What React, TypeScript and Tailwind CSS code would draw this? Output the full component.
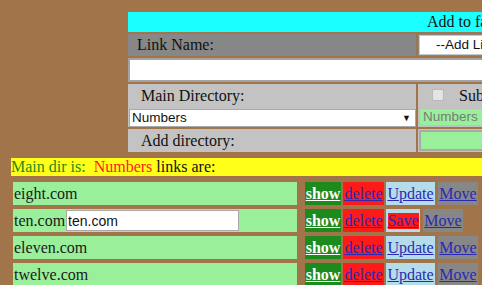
import React from 'react';

const links = ['eight.com', 'ten.com', 'eleven.com', 'twelve.com'];

const serif = "font-['Liberation_Serif','Times_New_Roman',serif]";
const sans = "font-['Liberation_Sans',Arial,sans-serif]";

const LinkRow: React.FC<{ name: string; editing?: boolean }> = ({ name, editing }) => {
  return (
    <div className="flex h-[23px] items-stretch">
      <div className="ml-[13px] flex w-[284px] items-center bg-[#9aef9a] pl-[1px] text-[16px] text-[#1a1a1a]">
        {name}
        {editing && (
          <input
            defaultValue={name}
            className={`${sans} ml-[1px] h-[21px] w-[173px] border border-[#a9a9a9] bg-white px-[1px] text-[14px] text-[#111] outline-none`}
          />
        )}
      </div>
      <div className="ml-[8px] flex items-stretch gap-[2px]">
        <a className="flex w-[36px] items-center justify-center bg-[#1d8a1d] font-bold text-white underline">show</a>
        <a className="flex w-[41px] items-center justify-center bg-[#ff1a1a] text-[#2a2ab0] underline">delete</a>
        {editing ? (
          <div className="flex w-[34px] items-center justify-center bg-[#b4dcea] p-[1px]">
            <a className="flex h-[16px] w-[31px] items-center justify-center bg-[#ff1a1a] text-[#2a2ab0] underline">Save</a>
          </div>
        ) : (
          <a className="flex w-[49px] items-center justify-center bg-[#b4dcea] text-[#2a2ab0] underline">Update</a>
        )}
        <a className="ml-[1px] flex w-[40px] items-center justify-center bg-[#878787] text-[#2a2ab0] underline">Move</a>
      </div>
    </div>
  );
};

const App: React.FC = () => {
  return (
    <div className={`${serif} h-[285px] w-[482px] overflow-hidden bg-[#a27449] text-[16px] leading-none text-[#111]`}>
      <div className="ml-[128px] flex w-[700px] flex-col gap-[2px] pt-[12px]">
        <div className="flex h-[20px] items-center bg-[#1affff] pl-[299px]">Add to favorites</div>
        <div className="flex h-[22px] gap-[2px]">
          <div className="flex w-[288px] items-center bg-[#878787] pl-[9px]">Link Name:</div>
          <div className="flex flex-1 items-center bg-[#878787] pl-[1px]">
            <div className={`${sans} flex h-[20px] w-[200px] items-center border border-[#c8c8c8] bg-white pl-[16px] text-[13.5px]`}>
              --Add Link--
            </div>
          </div>
        </div>
        <div className="h-[24px] border-2 border-[#a3a3a3] bg-white" />
        <div className="flex h-[43px] gap-[2px]">
          <div className="flex w-[288px] flex-col bg-[#c3c3c3]">
            <div className="pl-[13px] pt-[4px]">Main Directory:</div>
            <div className={`${sans} mt-[5px] ml-[1px] flex h-[18px] items-center justify-between border border-[#a9a9a9] bg-white pl-[2px] pr-[4px] text-[13.5px]`}>
              Numbers
              <span className="text-[9px]">▼</span>
            </div>
          </div>
          <div className="flex flex-1 flex-col bg-[#c3c3c3]">
            <div className="flex items-center pl-[14px] pt-[2px]">
              <span className="h-[12px] w-[12px] rounded-[2px] border border-[#b8b8b8] bg-[#e4e4e4]" />
              <span className="ml-[15px] mt-[2px]">Subdirectory:</span>
            </div>
            <div className={`${sans} mt-[4px] ml-[1px] flex h-[18px] w-[150px] items-center border border-[#c0c0c0] bg-[#9aef9a] pl-[3px] text-[13.5px] text-[#7a7a7a]`}>
              Numbers
            </div>
          </div>
        </div>
        <div className="flex h-[23px] gap-[2px]">
          <div className="flex w-[288px] items-center bg-[#c3c3c3] pl-[13px]">Add directory:</div>
          <div className="flex flex-1 items-center bg-[#c3c3c3] pl-[1px]">
            <div className="h-[21px] w-[200px] border-2 border-[#a9a9a9] bg-[#9aef9a]" />
          </div>
        </div>
      </div>
      <div className="ml-[11px] mt-[6px] flex h-[18px] items-center whitespace-pre bg-[#ffff1a]">
        <span className="text-[#1d8a1d]">Main dir is:  </span>
        <span className="text-[#ff1a1a]">Numbers</span>
        <span> links are:</span>
      </div>
      <div className="mt-[6px] flex flex-col gap-[4px]">
        {links.map((l) => (
          <LinkRow key={l} name={l} editing={l === 'ten.com'} />
        ))}
      </div>
    </div>
  );
};

export default App;
